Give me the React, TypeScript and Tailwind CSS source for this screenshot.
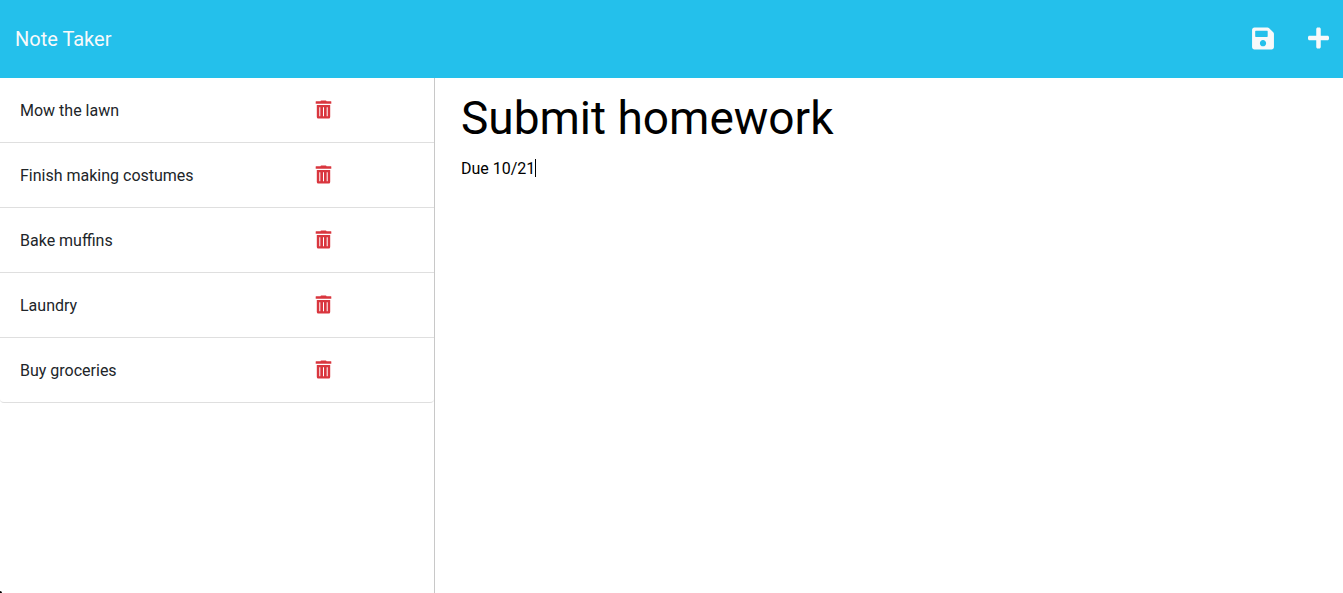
import { useState } from "react";
import { FaPlus, FaSave } from "react-icons/fa";

const initialNotes = [
  "Mow the lawn",
  "Finish making costumes",
  "Bake muffins",
  "Laundry",
  "Buy groceries",
];

function TrashIcon() {
  return (
    <svg viewBox="0 0 17 19" fill="currentColor" className="h-[19px] w-[17px]">
      <path d="M6 0.5h5l0.6 0.7h4.3a0.4 0.4 0 0 1 0.4 0.4v2.1H0.7V1.6a0.4 0.4 0 0 1 0.4-0.4h4.3z" />
      <path
        fillRule="evenodd"
        d="M1.8 5h13.4v12a1.5 1.5 0 0 1-1.5 1.5H3.3A1.5 1.5 0 0 1 1.8 17zM4.3 7.2v9.1h1V7.2zM8 7.2v9.1h1V7.2zM11.7 7.2v9.1h1V7.2z"
      />
    </svg>
  );
}

export default function App() {
  const [notes, setNotes] = useState(initialNotes);
  const [title, setTitle] = useState("Submit homework");
  const [text, setText] = useState("Due 10/21");

  const save = () => {
    if (title) setNotes([...notes, title]);
  };
  const clear = () => {
    setTitle("");
    setText("");
  };

  return (
    <div className="relative flex min-h-screen flex-col bg-white font-['Roboto','Liberation_Sans',sans-serif] text-base text-[#212529]">
      <header className="flex h-[78px] items-center justify-between bg-[#24c0eb] pr-[14px] pl-[15px] text-[#f8f9fa]">
        <a href="#" className="text-xl">
          Note Taker
        </a>
        <div className="flex gap-[34px] pb-[2px]">
          <button type="button" aria-label="Save note" onClick={save}>
            <FaSave className="h-[25px] w-[22px]" />
          </button>
          <button type="button" aria-label="New note" onClick={clear}>
            <FaPlus className="h-6 w-[21px]" />
          </button>
        </div>
      </header>
      <div className="grid flex-1 grid-cols-[435px_1fr]">
        <aside className="border-r border-[#c8c8c8]">
          <ul>
            {notes.map((note, i) => (
              <li
                key={i}
                className="flex h-[65px] items-center border-b border-[#dfdfdf] pl-5 last:rounded-b"
              >
                <span className="w-[295px] pt-px">{note}</span>
                <button
                  type="button"
                  aria-label={`Delete ${note}`}
                  className="pb-px text-[#d9363e]"
                  onClick={() => setNotes(notes.filter((_, n) => n !== i))}
                >
                  <TrashIcon />
                </button>
              </li>
            ))}
          </ul>
        </aside>
        <main className="flex flex-col pt-1 pr-4 pl-[26px] text-black">
          <input
            aria-label="Note title"
            value={title}
            onChange={(e) => setTitle(e.target.value)}
            className="h-[72px] w-full text-[46px] outline-none"
          />
          <div className="relative flex-1 leading-6">
            <textarea
              aria-label="Note text"
              value={text}
              onChange={(e) => setText(e.target.value)}
              className="block h-full w-full resize-none pt-[3px] caret-transparent outline-none"
            />
            <div
              aria-hidden="true"
              className="pointer-events-none absolute top-[2px] left-0 flex h-6 items-center"
            >
              <span className="invisible">{text}</span>
              <span className="h-[18px] w-px bg-black" />
            </div>
          </div>
        </main>
      </div>
      <div
        aria-hidden="true"
        className="absolute bottom-0 left-0 h-[2px] w-[2px] rounded-tr-[2px] bg-black"
      />
    </div>
  );
}
